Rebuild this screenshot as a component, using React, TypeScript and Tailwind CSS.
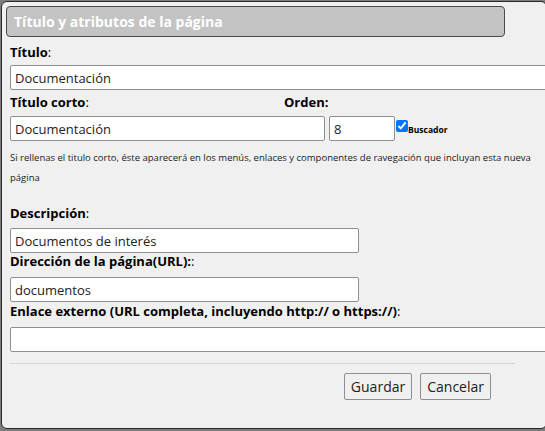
import React from 'react'

const font = { fontFamily: '"Open Sans", "Noto Sans", sans-serif' }

function Label({ text, colons = ':' }: { text: string; colons?: string }) {
  return (
    <div className="text-[13px] leading-[17px] text-black">
      <span className="font-bold">{text}</span>
      <span>{colons}</span>
    </div>
  )
}

function Field({ value, className }: { value: string; className: string }) {
  return (
    <input
      readOnly
      value={value}
      className={`h-[25px] rounded-[2px] border border-[#8f8f8f] bg-white px-[4px] text-[13px] text-[#222] outline-none ${className}`}
    />
  )
}

export default function App() {
  return (
    <div className="h-[431px] w-[545px] overflow-hidden bg-[#7d7d7d]" style={font}>
      <div className="ml-[1px] mt-[1px] flex h-[428px] w-[546px] flex-col overflow-hidden rounded-[6px] border border-[#2a2a2a] bg-[#f0f0f0] px-[4px] pt-[4px]">
        {/* Header */}
        <div className="flex h-[31px] w-[499px] items-center rounded-[4px] border border-[#4a4a4a] bg-[#c3c3c3] px-[7px]">
          <span className="text-[14px] font-bold text-white">Título y atributos de la página</span>
        </div>

        <div className="flex flex-col px-[4px]">
          <div className="mt-[7px]">
            <Label text="Título" />
          </div>
          <Field value="Documentación" className="mt-[4px] w-[560px]" />

          <div className="mt-[4px] flex">
            <div className="w-[274px]">
              <Label text="Título corto" />
            </div>
            <div className="text-[13px] font-bold leading-[17px]">Orden:</div>
          </div>
          <div className="mt-[5px] flex items-center">
            <Field value="Documentación" className="w-[315px]" />
            <Field value="8" className="ml-[4px] w-[66px]" />
            <input type="checkbox" readOnly checked className="ml-[1px] mt-[-6px] h-[12px] w-[12px] accent-[#0075ff]" />
            <span className="mt-[4px] text-[8.5px] font-bold leading-none">Buscador</span>
          </div>

          <p className="mt-[7px] text-[9.5px] leading-[20px] text-[#222]">
            Si rellenas el titulo corto, éste aparecerá en los menús, enlaces y componentes de ravegación que incluyan esta nueva página
          </p>

          <div className="mt-[17px]">
            <Label text="Descripción" />
          </div>
          <Field value="Documentos de interés" className="mt-[6px] w-[349px]" />

          <div className="mt-0">
            <Label text="Dirección de la página(URL):" />
          </div>
          <Field value="documentos" className="mt-[7px] w-[349px]" />

          <div className="mt-[1px]">
            <Label text="Enlace externo (URL completa, incluyendo http:// o https://)" />
          </div>
          <Field value="" className="mt-[7px] w-[560px]" />

          <div className="mt-[11px] h-px w-[505px] bg-[#d4d4d4]" />

          <div className="mt-[9px] flex w-[481px] justify-end gap-[8px]">
            <button className="h-[27px] rounded-[2px] border border-[#8f8f8f] bg-[#f0f0f0] px-[6px] text-[14px] text-[#222]">
              Guardar
            </button>
            <button className="h-[27px] rounded-[2px] border border-[#8f8f8f] bg-[#f0f0f0] px-[6px] text-[14px] text-[#222]">
              Cancelar
            </button>
          </div>
        </div>
      </div>
    </div>
  )
}
